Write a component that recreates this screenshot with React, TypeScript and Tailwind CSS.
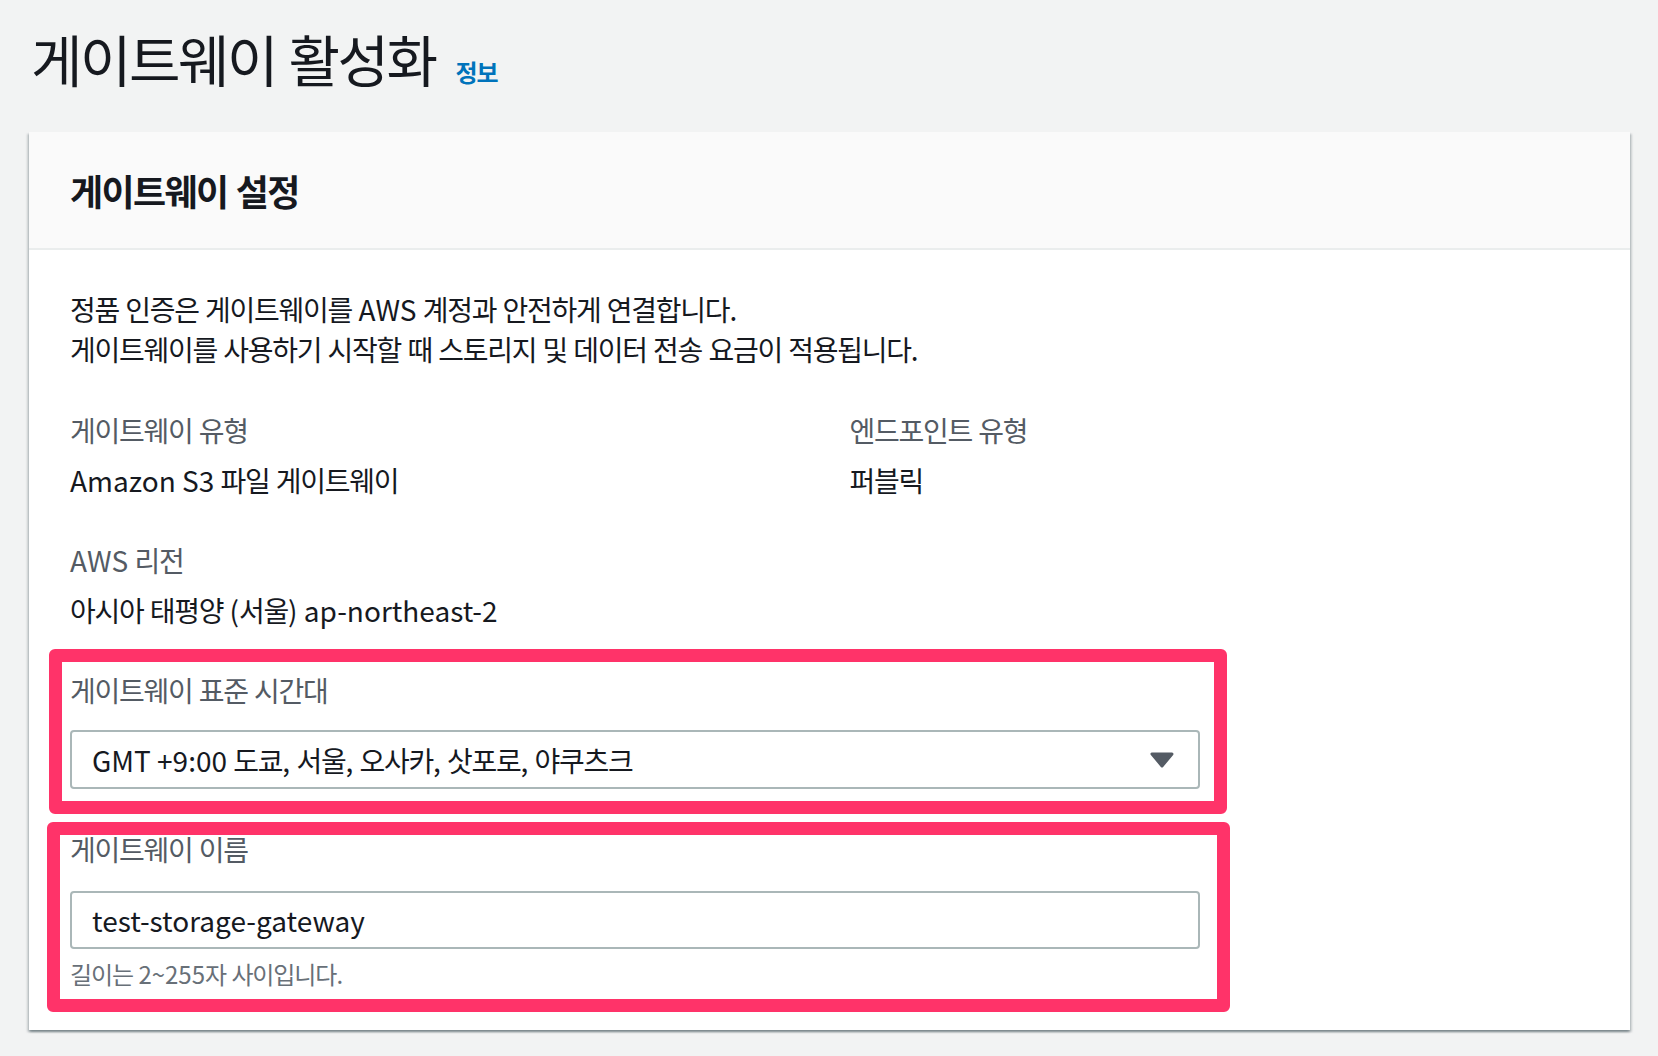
import React from "react";

const FONT = {
  fontFamily: '"Noto Sans CJK KR", "Noto Sans", sans-serif',
};

// Hangul in the reference is a bit narrower than Noto's, so tighten only those runs
function Ko({ children }: { children: string }) {
  const parts = children.split(/([가-힣]+)/);
  return (
    <>
      {parts.map((part, i) =>
        /[가-힣]/.test(part) ? (
          <span key={i} className="tracking-[-0.045em]">
            {part}
          </span>
        ) : (
          <React.Fragment key={i}>{part}</React.Fragment>
        )
      )}
    </>
  );
}

function KeyValue({ label, value }: { label: string; value: string }) {
  return (
    <div>
      <div className="text-[28px] leading-[40px] text-[#545b64]">
        <Ko>{label}</Ko>
      </div>
      <div className="mt-[10px] text-[28px] leading-[40px] text-[#16191f]">
        <Ko>{value}</Ko>
      </div>
    </div>
  );
}

function CaretDown() {
  return (
    <svg width="24" height="16" viewBox="0 0 24 16" className="shrink-0">
      <polygon
        points="2,2 22,2 12,14"
        fill="#545b64"
        stroke="#545b64"
        strokeWidth="3"
        strokeLinejoin="round"
      />
    </svg>
  );
}

export default function App() {
  return (
    <div className="min-h-screen bg-[#f2f3f3] text-[#16191f]" style={FONT}>
      <div className="pl-[29px] pr-[28px] pt-[24px]">
        <div className="flex items-baseline pl-[2px]">
          <h1 className="text-[56px] leading-[68px] font-normal text-[#16191f]">
            <Ko>게이트웨이 활성화</Ko>
          </h1>
          <a className="ml-[20px] text-[24px] font-bold text-[#0073bb]">
            <Ko>정보</Ko>
          </a>
        </div>

        <div className="mt-[40px] bg-white shadow-[0_2px_2px_0_rgba(0,28,36,0.3),2px_2px_2px_0_rgba(0,28,36,0.15),-2px_2px_2px_0_rgba(0,28,36,0.15)]">
          <div className="flex h-[118px] items-center border-b-2 border-[#eaeded] bg-[#fafafa] px-[41px]">
            <h2 className="text-[36px] font-bold leading-[48px] text-[#16191f]">
              <Ko>게이트웨이 설정</Ko>
            </h2>
          </div>

          <div className="px-[41px] pt-[39px] pb-[18px]">
            <p className="text-[28px] leading-[40px] text-[#16191f]">
              <Ko>정품 인증은 게이트웨이를 AWS 계정과 안전하게 연결합니다.</Ko>
              <br />
              <Ko>게이트웨이를 사용하기 시작할 때 스토리지 및 데이터 전송 요금이 적용됩니다.</Ko>
            </p>

            <div className="mt-[41px] grid grid-cols-2 gap-x-[40px] gap-y-[40px]">
              <KeyValue label="게이트웨이 유형" value="Amazon S3 파일 게이트웨이" />
              <KeyValue label="엔드포인트 유형" value="퍼블릭" />
              <KeyValue label="AWS 리전" value="아시아 태평양 (서울) ap-northeast-2" />
            </div>

            {/* annotation box 1 */}
            <div className="mt-[19px] ml-[-21px] w-[1178px] rounded-[6px] border-[13px] border-[#ff3369] pl-[8px] pr-[14px] pt-[8px] pb-[12px]">
              <div className="text-[28px] leading-[40px] text-[#545b64]">
                <Ko>게이트웨이 표준 시간대</Ko>
              </div>
              <div className="mt-[20px] flex h-[59px] items-center justify-between rounded-[4px] border-2 border-[#aab7b8] bg-white pl-[20px] pr-[24px]">
                <span className="text-[28px] leading-[40px] text-[#16191f]">
                  <Ko>GMT +9:00 도쿄, 서울, 오사카, 삿포로, 야쿠츠크</Ko>
                </span>
                <CaretDown />
              </div>
            </div>

            {/* annotation box 2 */}
            <div className="mt-[8px] ml-[-23px] w-[1183px] rounded-[6px] border-[13px] border-[#ff3369] pl-[10px] pr-[17px] pb-[9px]">
              <div className="text-[28px] leading-[28px] text-[#545b64]">
                <Ko>게이트웨이 이름</Ko>
              </div>
              <div className="mt-[28px] flex h-[58px] items-center rounded-[4px] border-2 border-[#aab7b8] bg-white pl-[20px]">
                <span className="text-[28px] leading-[40px] text-[#16191f]">
                  test-storage-gateway
                </span>
              </div>
              <div className="mt-[9px] text-[24px] leading-[32px] text-[#687078]">
                <Ko>길이는 2~255자 사이입니다.</Ko>
              </div>
            </div>
          </div>
        </div>
      </div>
    </div>
  );
}
